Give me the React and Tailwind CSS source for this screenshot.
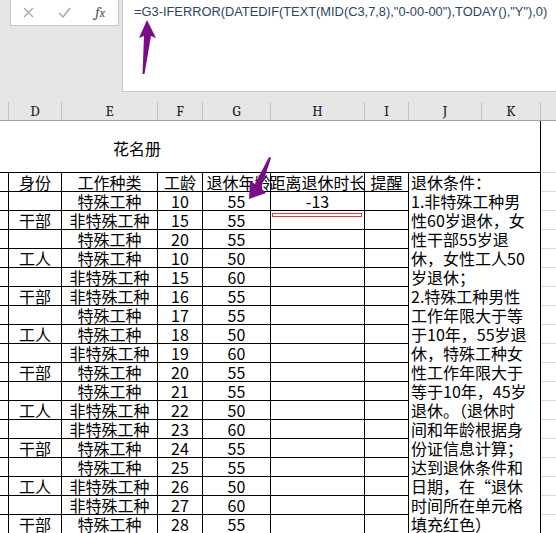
import React from "react";

const headCols = [
  { label: "C", w: "w-[9px]" },
  { label: "D", w: "w-[53px]" },
  { label: "E", w: "w-[96px]" },
  { label: "F", w: "w-[45px]" },
  { label: "G", w: "w-[68px]" },
  { label: "H", w: "w-[94px]" },
  { label: "I", w: "w-[44px]" },
  { label: "J", w: "w-[73px]" },
  { label: "K", w: "w-[59px]" },
];

const rows = [
  ["", "特殊工种", "10", "55", "-13"],
  ["干部", "非特殊工种", "15", "55", "mark"],
  ["", "特殊工种", "20", "55"],
  ["工人", "特殊工种", "10", "50"],
  ["", "非特殊工种", "15", "60"],
  ["干部", "非特殊工种", "16", "55"],
  ["", "特殊工种", "17", "55"],
  ["工人", "特殊工种", "18", "50"],
  ["", "非特殊工种", "19", "60"],
  ["干部", "特殊工种", "20", "55"],
  ["", "特殊工种", "21", "55"],
  ["工人", "非特殊工种", "22", "50"],
  ["", "非特殊工种", "23", "60"],
  ["干部", "特殊工种", "24", "55"],
  ["", "特殊工种", "25", "55"],
  ["工人", "非特殊工种", "26", "50"],
  ["", "非特殊工种", "27", "60"],
  ["干部", "特殊工种", "28", "55"],
];

const note = [
  "退休条件：",
  "1.非特殊工种男",
  "性60岁退休，女",
  "性干部55岁退",
  "休，女性工人50",
  "岁退休；",
  "2.特殊工种男性",
  "工作年限大于等",
  "于10年，55岁退",
  "休，特殊工种女",
  "性工作年限大于",
  "等于10年，45岁",
  "退休。（退休时",
  "间和年龄根据身",
  "份证信息计算；",
  "达到退休条件和",
  "日期，在“退休",
  "时间所在单元格",
  "填充红色）",
];

function Cell({ w, children, className = "" }) {
  return (
    <div
      className={`${w} h-full shrink-0 border-r border-black flex items-center justify-center overflow-hidden whitespace-nowrap ${className}`}
    >
      {children}
    </div>
  );
}

function Row({ cells }) {
  const [d, e, f, g, h, i] = cells;
  return (
    <div className="flex h-[19px] border-b border-black leading-[18px]">
      <Cell w="w-[9px]" />
      <Cell w="w-[53px]">{d}</Cell>
      <Cell w="w-[96px]">{e}</Cell>
      <Cell w="w-[45px]">{f}</Cell>
      <Cell w="w-[68px]">{g}</Cell>
      {h === "mark" ? (
        <div className="w-[94px] h-full shrink-0 border-r border-black pt-[2px] pl-[1px]">
          <div className="w-[90px] h-[4px] border border-[#e5393e] bg-white" />
        </div>
      ) : (
        <Cell w="w-[94px]">{h}</Cell>
      )}
      <Cell w="w-[44px]">{i}</Cell>
    </div>
  );
}

export default function App() {
  return (
    <div className="relative w-[556px] h-[533px] overflow-hidden bg-white font-['Noto_Sans_CJK_SC'] text-[16px] text-black">
      {/* formula bar */}
      <div className="bg-[#e6e6e6]">
        <div className="flex h-[92px]">
          <div className="ml-[10px] w-[109px] h-[26px] shrink-0 bg-white border border-t-0 border-[#c6c6c6] flex items-center">
            <div className="w-[36px] flex justify-center">
              <svg width="11" height="11" viewBox="0 0 11 11">
                <path d="M1 1 L10 10 M10 1 L1 10" stroke="#a9a9a9" strokeWidth="1.4" fill="none" />
              </svg>
            </div>
            <div className="w-[36px] flex justify-center">
              <svg width="13" height="11" viewBox="0 0 13 11">
                <path d="M1 6 L5 10 L12 1" stroke="#a9a9a9" strokeWidth="1.5" fill="none" />
              </svg>
            </div>
            <div className="w-[36px] flex justify-center">
              <span className="italic font-serif text-[15px] leading-none text-[#555]">
                f<span className="text-[12px]">x</span>
              </span>
            </div>
          </div>
          <div className="ml-[3px] flex-1 bg-white border-l border-b border-[#c6c6c6] pl-[11px] pt-[4px] font-['Liberation_Sans'] text-[12.85px] leading-[16px] text-[#2b4466] whitespace-nowrap overflow-hidden">
            =G3-IFERROR(DATEDIF(TEXT(MID(C3,7,8),"0-00-00"),TODAY(),"Y"),0)
          </div>
        </div>

        {/* column letters */}
        <div className="flex h-[29px] items-end border-b border-[#a3a3a3]">
          {headCols.map((c) => (
            <div
              key={c.label}
              className={`${c.w} h-[18px] shrink-0 border-r border-[#c3c3c3] flex items-center justify-center overflow-hidden font-serif text-[15px] leading-none text-[#222]`}
            >
              {c.label === "C" ? "" : c.label}
            </div>
          ))}
          <div className="flex-1 h-[18px]" />
        </div>
      </div>

      {/* sheet */}
      <div className="flex">
        <div className="w-[541px] shrink-0">
          <div className="h-[52px] border-r border-b border-black flex items-center pl-[113px] pt-[3px]">
            花名册
          </div>
          <div className="flex">
            <div className="w-[409px] shrink-0">
              <Row cells={["身份", "工作种类", "工龄", <span key="g" className="pl-[4px]">退休年龄</span>, "距离退休时长", "提醒"]} />
              {rows.map((r, idx) => (
                <Row key={idx} cells={[r[0], r[1], r[2], r[3], r[4] || "", ""]} />
              ))}
            </div>
            <div className="w-[132px] shrink-0 border-r border-black pl-[2px] leading-[19px] whitespace-nowrap overflow-hidden">
              {note.map((l, idx) => (
                <div key={idx} className="h-[19px]">{l}</div>
              ))}
            </div>
          </div>
        </div>
        <div className="flex-1">
          <div className="h-[52px] border-b border-[#d9d9d9]" />
          {note.map((_, idx) => (
            <div key={idx} className="h-[19px] border-b border-[#d9d9d9]" />
          ))}
        </div>
      </div>

      {/* annotation arrows */}
      <svg className="absolute left-0 top-0 pointer-events-none" width="556" height="533" viewBox="0 0 556 533">
        <polygon points="147,20 156,38 151,36 144.5,74 142.5,74 144,36 139,38" fill="#7c0b88" />
        <polygon points="249,199 250,181 255,184 269,157 271,158 261,188 266,193" fill="#7c0b88" />
      </svg>
    </div>
  );
}
